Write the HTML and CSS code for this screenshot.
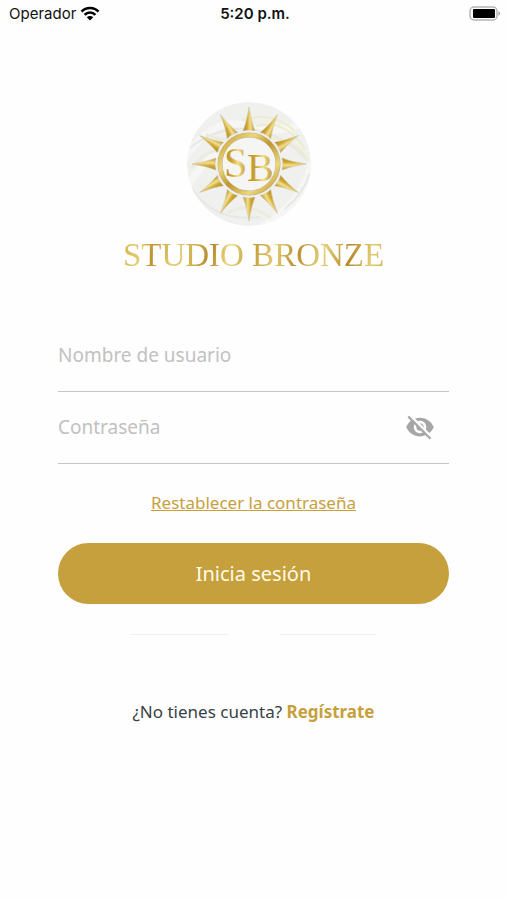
FILE: index.html
```html
<!doctype html>
<html lang="es">
    <head>
        <meta charset="UTF-8" />
        <meta name="viewport" content="width=device-width, initial-scale=1.0" />
        <title>Studio Bronze</title>
        <link rel="stylesheet" href="styles.css">
    </head>
    <body>
        <header class="status-bar">
            <div class="carrier">
                <span>Operador</span>
                <svg class="wifi" viewBox="0 0 20 15" aria-hidden="true">
                    <path d="M1.5 5.6a12 12 0 0 1 17 0M4.600 8.800a7.600 7.600 0 0 1 10.800 0" fill="none" stroke="#000" stroke-width="2.600" />
                    <path d="M6.800 11.300a4.600 4.600 0 0 1 6.400 0L10 14.500z" />
                </svg>
            </div>
            <time class="clock">5:20 p.m.</time>
            <svg class="battery" viewBox="0 0 32 16" aria-hidden="true">
                <rect x="1" y="1" width="27" height="13" rx="4" fill="#fff" stroke="#b5b5b5" stroke-width="1.500" />
                <rect x="4" y="3" width="22" height="9" rx="1" />
                <path d="M29.500 5q3 2.500 0 5z" fill="#999" />
            </svg>
        </header>
        <main class="login">
            <div class="brand">
                <svg class="sun" viewBox="0 0 126 126" role="img" aria-label="SB">
                    <defs>
                        <linearGradient id="gold" x1="0" y1="0" x2="1" y2="0">
                            <stop offset="0" stop-color="#b98b22" />
                            <stop offset="0.35" stop-color="#cfa836" />
                            <stop offset="0.6" stop-color="#f3e088" />
                            <stop offset="1" stop-color="#bd902b" />
                        </linearGradient>
                        <linearGradient id="ring" x1="0" y1="0" x2="1" y2="1">
                            <stop offset="0" stop-color="#c79c30" />
                            <stop offset="0.3" stop-color="#ecd779" />
                            <stop offset="0.5" stop-color="#c0952b" />
                            <stop offset="0.75" stop-color="#ecd779" />
                            <stop offset="1" stop-color="#bd8f28" />
                        </linearGradient>
                        <clipPath id="disc"><circle cx="63" cy="63" r="62" /></clipPath>
                        <path id="ray" d="M63 6q2 14 6 24q-6-2-12 0q4-10 6-24z" fill="url(#gold)" stroke="#c9bf9c" stroke-width="0.500" />
                    </defs>
                    <g clip-path="url(#disc)">
                        <circle cx="63" cy="63" r="62" fill="#f0f0ef" />
                        <g fill="none">
                            <path d="M-2 58Q28 14 60 25T128 18M0 88Q22 52 44 45M72 128Q116 104 126 62" stroke="#f6f6f5" stroke-width="7" />
                            <path d="M4 47Q30 26 62 28T122 60M6 88Q30 122 74 116M99 108Q118 92 124 72" stroke="#e7e7e6" stroke-width="2" />
                            <path d="M56 19Q86 10 108 29M70 25Q100 18 119 48M79 38Q106 34 122 59" stroke="#eeedcb" stroke-width="2" />
                            <path d="M20 33Q38 43 53 33M5 68Q18 50 34 49M42 112Q62 100 85 117" stroke="#ecebe1" stroke-width="3" />
                        </g>
                    </g>
                    <use href="#ray" />
                    <use href="#ray" transform="rotate(30 63 63)" />
                    <use href="#ray" transform="rotate(60 63 63)" />
                    <use href="#ray" transform="rotate(90 63 63)" />
                    <use href="#ray" transform="rotate(120 63 63)" />
                    <use href="#ray" transform="rotate(150 63 63)" />
                    <use href="#ray" transform="rotate(180 63 63)" />
                    <use href="#ray" transform="rotate(210 63 63)" />
                    <use href="#ray" transform="rotate(240 63 63)" />
                    <use href="#ray" transform="rotate(270 63 63)" />
                    <use href="#ray" transform="rotate(300 63 63)" />
                    <use href="#ray" transform="rotate(330 63 63)" />
                    <circle cx="63" cy="63" r="29" fill="#f5f5f4" stroke="#bbb49c" stroke-width="5" />
                    <circle cx="63" cy="63" r="29" fill="none" stroke="url(#ring)" stroke-width="4" />
                    <text class="monogram" x="38" y="76" font-size="42">S</text>
                    <text class="monogram" x="61" y="80" font-size="40">B</text>
                </svg>
                <h1 class="brand-name">STUDIO BRONZE</h1>
            </div>
            <form class="login-form">
                <div class="field">
                    <input type="text" id="username" aria-label="Nombre de usuario" placeholder="Nombre de usuario" />
                </div>
                <div class="field">
                    <input type="password" id="password" aria-label="Contraseña" placeholder="Contraseña" />
                    <button type="button" class="toggle" aria-label="Mostrar contraseña">
                        <svg viewBox="0 0 24 24" aria-hidden="true">
                            <path d="M12 7c2.760 0 5 2.240 5 5 0 .65-.13 1.260-.36 1.830l2.920 2.920c1.510-1.260 2.700-2.890 3.430-4.750-1.730-4.390-6-7.500-11-7.500-1.400 0-2.740.25-3.980.7l2.160 2.160C10.740 7.130 11.350 7 12 7zM2 4.270l2.280 2.280.46.46C3.080 8.300 1.780 10.020 1 12c1.730 4.390 6 7.500 11 7.500 1.550 0 3.030-.3 4.380-.84l.42.42L19.730 22 21 20.730 3.270 3 2 4.270zM7.530 9.800l1.550 1.550c-.05.21-.08.43-.08.65 0 1.660 1.340 3 3 3 .22 0 .44-.03.65-.08l1.550 1.550c-.67.33-1.410.53-2.200.53-2.760 0-5-2.240-5-5 0-.79.2-1.530.53-2.200zm4.310-.78l3.150 3.150.02-.16c0-1.660-1.340-3-3-3l-.17.01z" />
                        </svg>
                    </button>
                </div>
                <a class="reset" href="#">Restablecer la contraseña</a>
                <button type="submit" class="submit">Inicia sesión</button>
            </form>
            <div class="dividers">
                <span></span>
                <span></span>
            </div>
            <p class="signup">¿No tienes cuenta? <a href="#">Regístrate</a></p>
        </main>
    </body>
</html>
```
FILE: styles.css
```css
:root {
    --gold: #c6a03c;
    --line: #c4c4c4;
    --placeholder: #c1c1c1;
}
* {
    box-sizing: border-box;
}
body {
    margin: 0;
    background: #fefefe;
    color: #384048;
    font-family: "Noto Sans", sans-serif;
    font-size: 17px;
}
.status-bar {
    display: grid;
    grid-template-columns: 1fr auto 1fr;
    align-items: center;
    height: 27px;
    padding: 0 6px 0 9px;
    color: #111;
    font-family: Inter, sans-serif;
    font-size: 15px;
}
.carrier {
    display: flex;
    align-items: center;
    gap: 4px;
}
.wifi {
    width: 20px;
    height: 15px;
}
.clock {
    font-weight: 600;
}
.battery {
    width: 32px;
    height: 16px;
    justify-self: end;
}
.login {
    padding: 74px 58px 32px;
}
.brand {
    display: flex;
    flex-direction: column;
    align-items: center;
}
.sun {
    width: 126px;
    height: 126px;
    margin-right: 10px;
}
.monogram {
    font-family: "Liberation Serif", serif;
    fill: url(#gold);
}
.brand-name {
    margin: 8px 0 0;
    background: linear-gradient(100deg, #d4b54c, #e4cd72 8%, #be9230 12%, #e4cf76 20%, #cfb04c 28%, #b58529 34%, #e8d57e 40%, #c5a03e 50%, #e2cc72 58%, #bb9033 66%, #e4cf7c 76%, #b88a2b 86%, #e2cc76 94%, #cfb04c);
    background-clip: text;
    color: transparent;
    font-family: "Liberation Serif", serif;
    font-size: 33px;
    font-weight: 400;
    line-height: 40px;
    white-space: nowrap;
}
.login-form {
    display: flex;
    flex-direction: column;
    margin-top: 45px;
}
.field {
    display: flex;
    align-items: center;
    height: 72px;
    padding-bottom: 2px;
    border-bottom: 1px solid var(--line);
}
.field input {
    flex: 1;
    min-width: 0;
    padding: 0;
    border: 0;
    outline: 0;
    background: none;
    font: inherit;
    font-size: 19px;
}
.field input::placeholder {
    color: var(--placeholder);
    opacity: 1;
}
.toggle {
    display: flex;
    margin-right: 14px;
    padding: 0;
    border: 0;
    background: none;
    cursor: pointer;
}
.toggle svg {
    width: 30px;
    height: 30px;
    fill: #a6a6a6;
}
.reset {
    align-self: center;
    margin: 27px 0 28px;
    color: var(--gold);
    line-height: 24px;
}
.submit {
    height: 61px;
    border: 0;
    border-radius: 31px;
    background: var(--gold);
    color: #fffbe9;
    font: inherit;
    font-size: 20px;
    cursor: pointer;
}
.dividers {
    display: flex;
    justify-content: center;
    gap: 52px;
    margin-top: 30px;
}
.dividers span {
    width: 25%;
    height: 1px;
    background: #f0f0f0;
}
.signup {
    margin: 65px 0 0;
    line-height: 24px;
    text-align: center;
}
.signup a {
    color: var(--gold);
    font-weight: 700;
    text-decoration: none;
}
```
